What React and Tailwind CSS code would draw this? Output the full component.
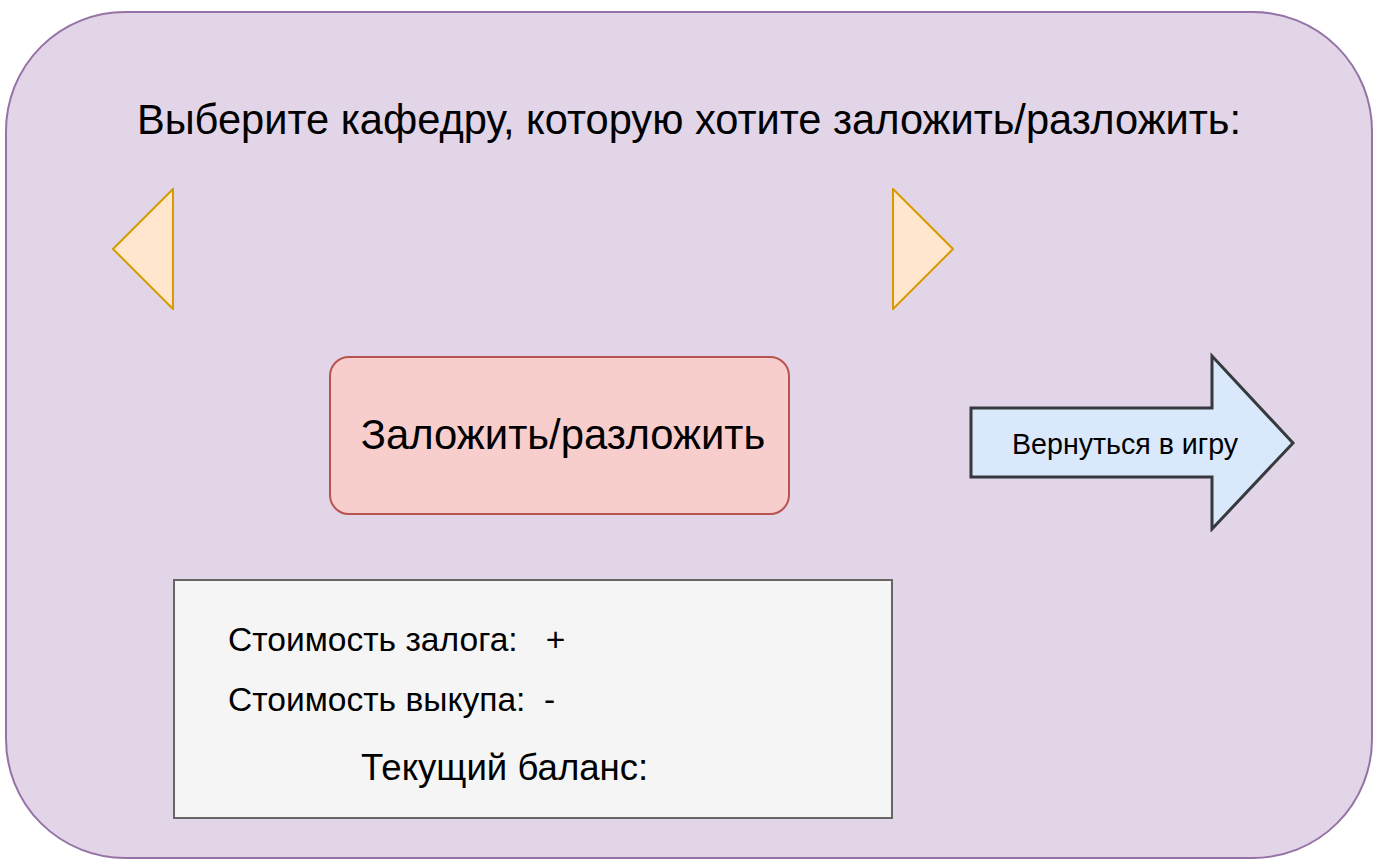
export default function App() {
  const font = { fontFamily: '"Liberation Sans", Arial, sans-serif' };
  return (
    <div className="w-[1378px] h-[864px] bg-white pt-[11px] pl-[5px] text-black" style={font}>
      <div className="w-[1368px] h-[848px] rounded-[120px] border-2 border-[#9673a6] bg-[#e1d5e7] flex flex-col">
        <div className="mt-[85px] h-[44px] leading-[44px] text-center text-[41.6px] whitespace-nowrap">
          Выберите кафедру, которую хотите заложить/разложить:
        </div>
        <div className="mt-[46px] flex ml-[105px]">
          <svg width="62" height="122" viewBox="0 0 62 122">
            <polygon points="61,1 1,61 61,121" fill="#ffe6cc" stroke="#d79b00" strokeWidth="2" />
          </svg>
          <svg width="62" height="122" viewBox="0 0 62 122" className="ml-[718px]">
            <polygon points="1,1 61,61 1,121" fill="#ffe6cc" stroke="#d79b00" strokeWidth="2" />
          </svg>
        </div>
        <div className="mt-[42px] flex items-start ml-[322px]">
          <div className="mt-[4px] w-[461px] h-[159px] rounded-[20px] border-2 border-[#b85450] bg-[#f8cecc] flex items-center justify-center pl-[7px] text-[41.8px] whitespace-nowrap">
            Заложить/разложить
          </div>
          <div className="ml-[178px] relative w-[328px] h-[180px]">
            <svg width="328" height="180" viewBox="0 0 328 180" className="absolute left-0 top-0">
              <polygon
                points="3,56 244,56 244,4 325,91 244,177 244,125 3,125"
                fill="#dae8fc"
                stroke="#36393d"
                strokeWidth="3"
                strokeLinejoin="miter"
              />
            </svg>
            <div className="absolute left-[44px] top-[75px] h-[34px] leading-[34px] text-[28.6px] whitespace-nowrap">
              Вернуться в игру
            </div>
          </div>
        </div>
        <div className="mt-[47px] ml-[166px] w-[720px] h-[240px] border-2 border-[#666666] bg-[#f5f5f5] flex flex-col">
          <div className="mt-[39px] ml-[53px] h-[40px] leading-[40px] text-[33.6px] whitespace-pre">
            {'Стоимость залога:   +'}
          </div>
          <div className="mt-[20px] ml-[53px] h-[40px] leading-[40px] text-[33.6px] whitespace-pre">
            {'Стоимость выкупа:  -'}
          </div>
          <div className="mt-[28px] ml-[186px] h-[40px] leading-[40px] text-[36.6px] whitespace-pre">
            {'Текущий баланс:'}
          </div>
        </div>
      </div>
    </div>
  );
}
